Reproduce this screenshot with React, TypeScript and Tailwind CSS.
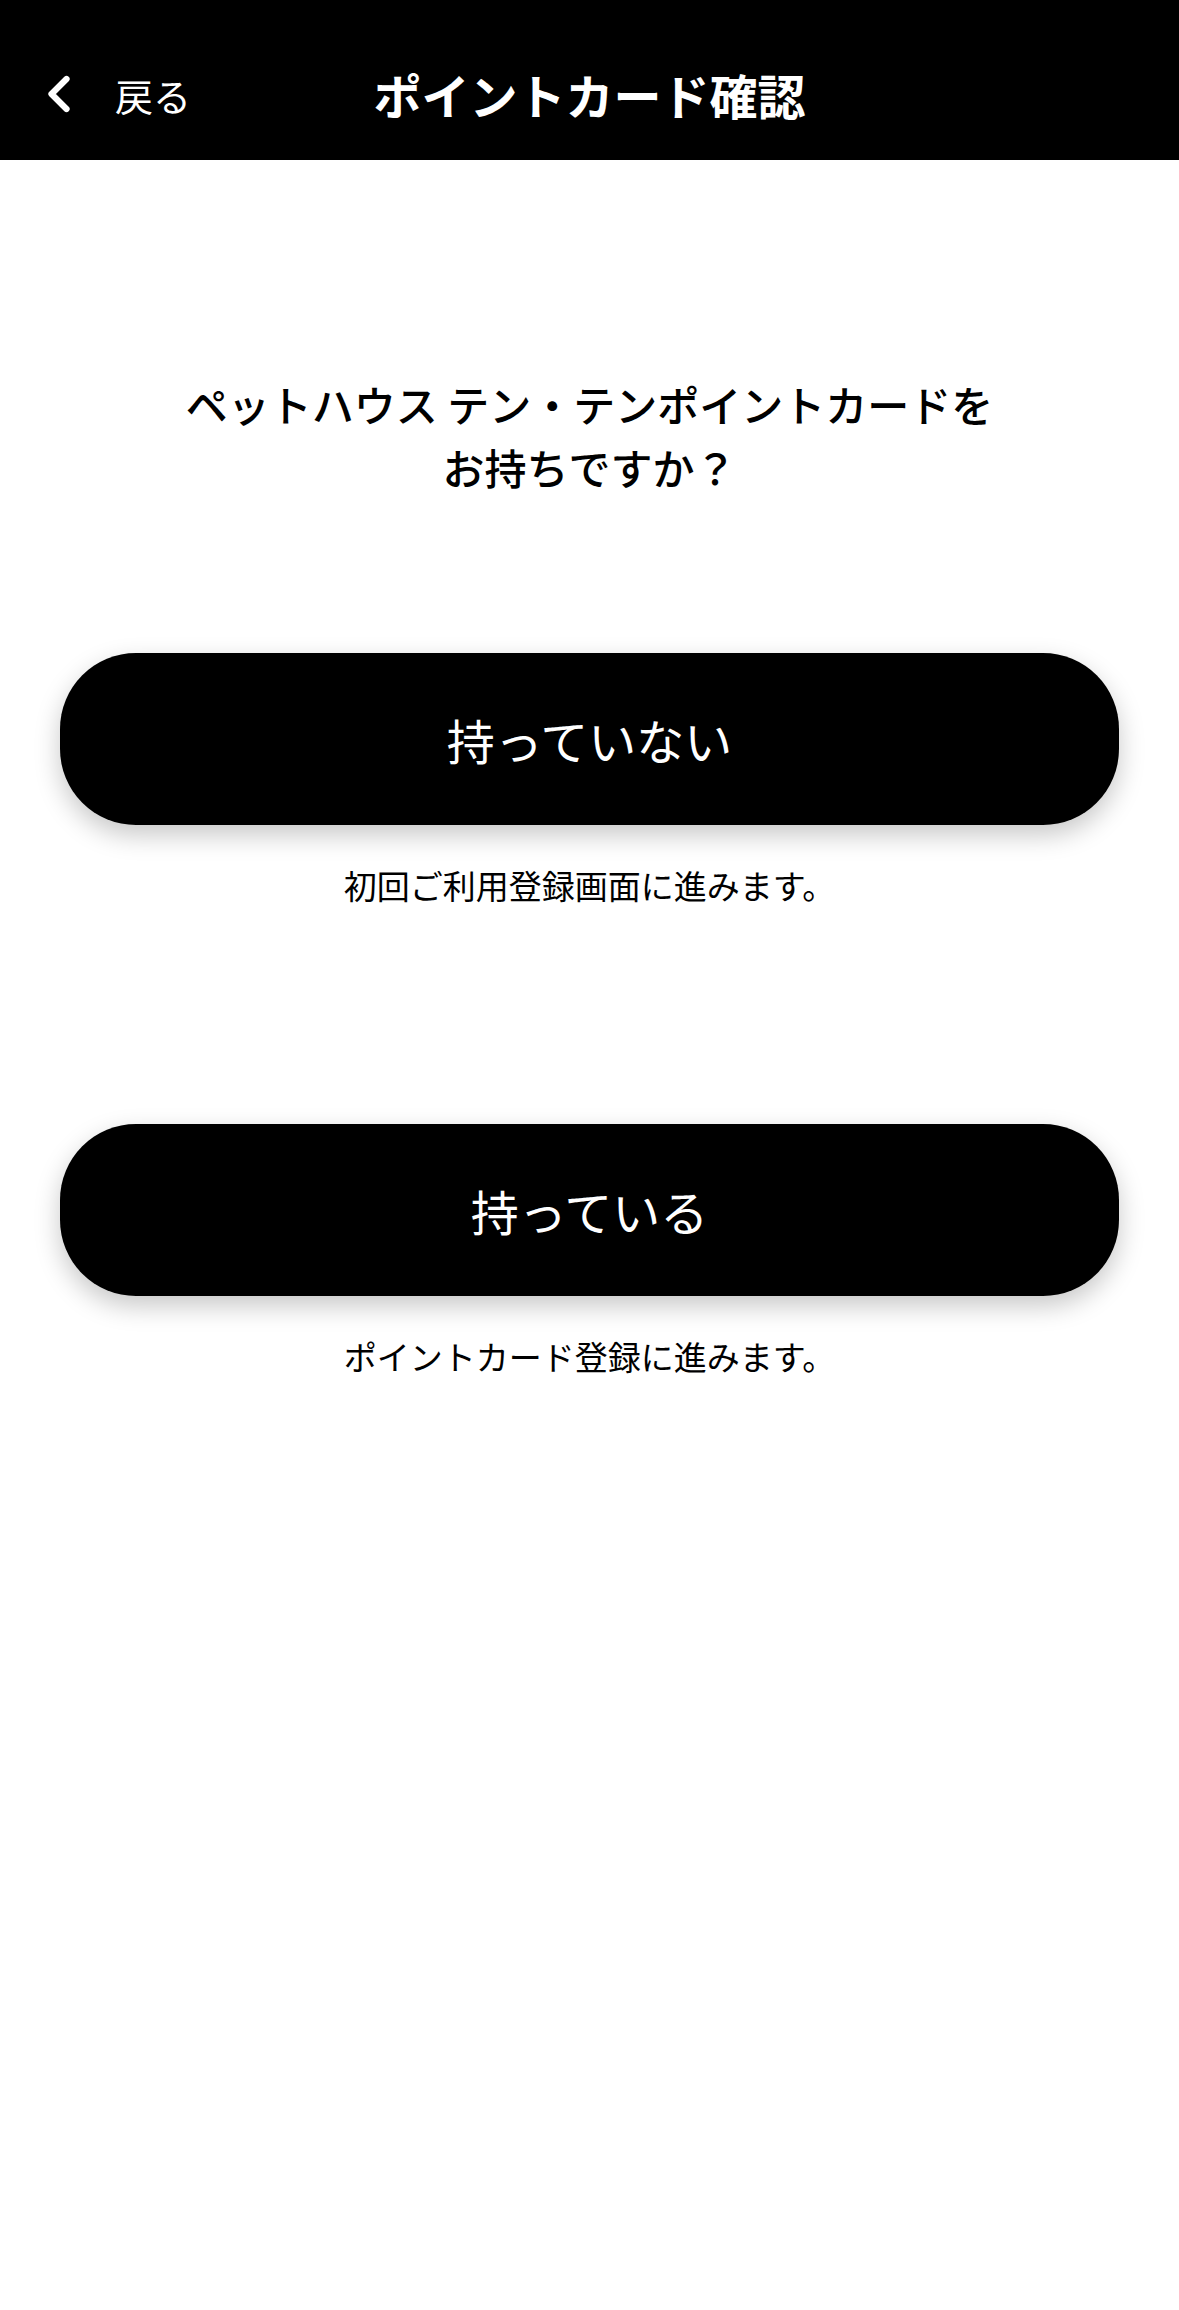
import { ChevronLeft } from 'lucide-react';

const font = { fontFamily: '"Noto Sans CJK JP", "Noto Sans", sans-serif' };

function Choice({ label, note }: { label: string; note: string }) {
  return (
    <div className="flex flex-col items-center">
      <button className="w-full h-[172px] rounded-[76px] bg-black text-white text-[48px] shadow-[0_10px_26px_rgba(0,0,0,0.22)]">
        {label}
      </button>
      <p className="mt-[36px] text-[33px] leading-[48px] text-black">{note}</p>
    </div>
  );
}

export default function App() {
  return (
    <div className="min-h-[2310px] bg-white" style={font}>
      <header className="h-[160px] pt-[28px] bg-black grid grid-cols-[1fr_auto_1fr] items-center text-white">
        <div className="flex items-center pl-[29px]">
          <ChevronLeft className="w-[60px] h-[60px]" strokeWidth={2.5} />
          <span className="ml-[26px] text-[38px]">戻る</span>
        </div>
        <h1 className="text-[48px] font-bold">ポイントカード確認</h1>
        <div />
      </header>

      <main className="px-[60px]">
        <p className="mt-[212px] text-center text-[42px] leading-[63px] font-medium text-black">
          ペットハウス テン・テンポイントカードを
          <br />
          お持ちですか？
        </p>

        <div className="mt-[155px]">
          <Choice label="持っていない" note="初回ご利用登録画面に進みます。" />
        </div>
        <div className="mt-[215px]">
          <Choice label="持っている" note="ポイントカード登録に進みます。" />
        </div>
      </main>
    </div>
  );
}
